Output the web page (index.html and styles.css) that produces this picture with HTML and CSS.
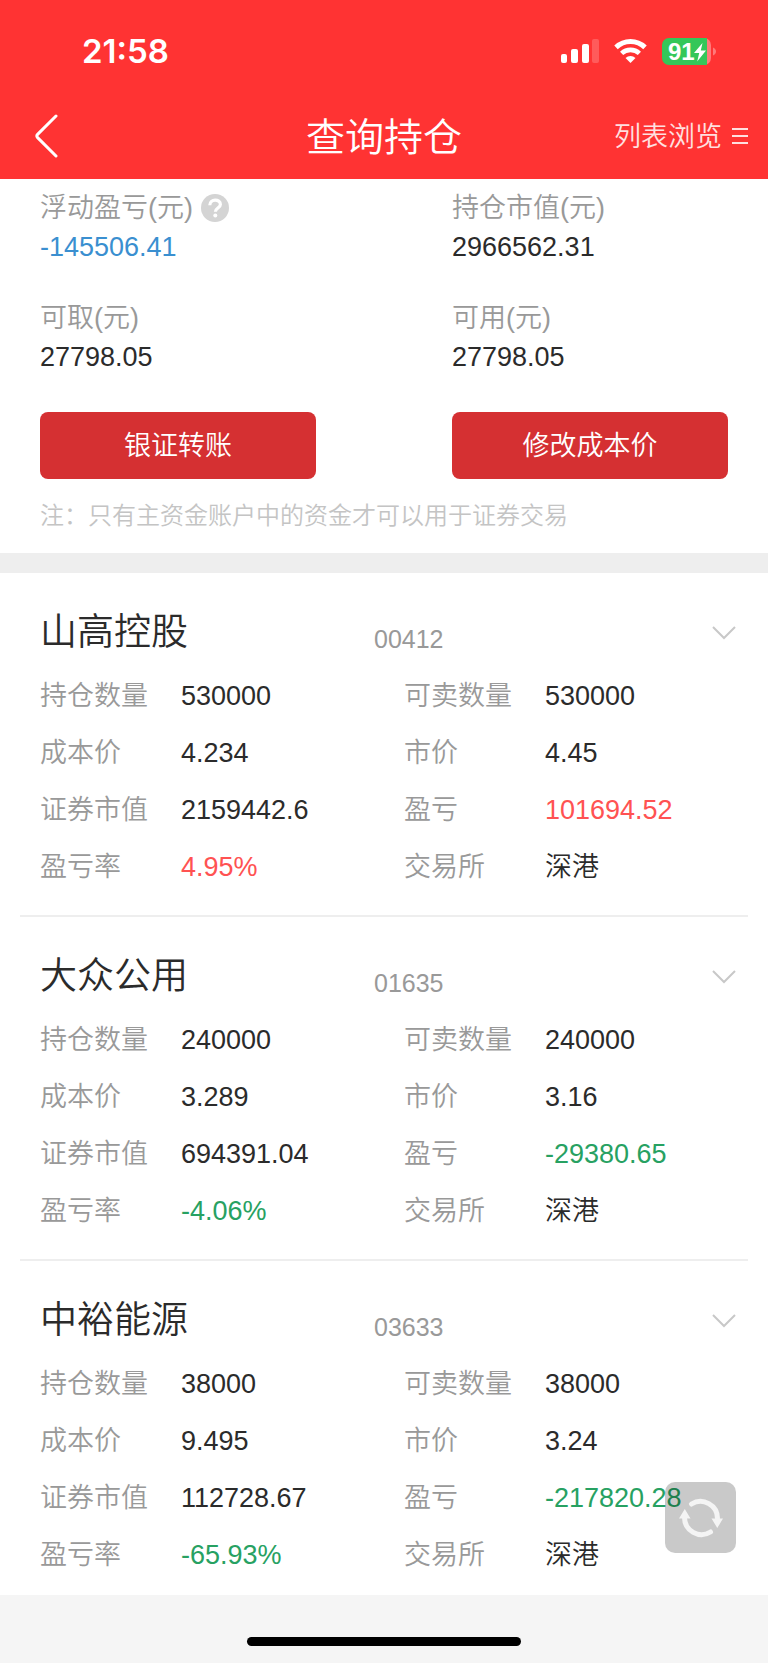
FILE: index.html
```html
<!DOCTYPE html>
<html lang="zh-CN">
<head>
  <meta charset="UTF-8">
  <meta name="viewport" content="width=device-width, initial-scale=1.0">
  <title>查询持仓</title>
  <link rel="stylesheet" href="styles.css">
</head>
<body>
  <header class="header">
    <div class="status-bar">
      <span class="time">21:58</span>
      <div class="status-icons">
        <svg class="signal" width="39" height="24" viewBox="0 0 39 24" fill="#fff">
          <rect x="1" y="15" width="6" height="9" rx="2"/>
          <rect x="11" y="10" width="7" height="14" rx="2"/>
          <rect x="22" y="5" width="7" height="19" rx="2"/>
          <rect x="32" y="0" width="7" height="24" rx="2" opacity=".2"/>
        </svg>
        <svg class="wifi" width="33" height="24" viewBox="0 0 33 24">
          <path d="M2 8.4a21 21 0 0 1 29 0" fill="none" stroke="#fff" stroke-width="5"/>
          <path d="M7.6 14.4a13 13 0 0 1 17.8 0" fill="none" stroke="#fff" stroke-width="4.6"/>
          <path d="M16.5 24l-5-5.1a7.3 7.3 0 0 1 10 0z" fill="#fff"/>
        </svg>
        <svg class="battery" width="54" height="27" viewBox="0 0 54 27">
          <path d="M7 0h35a7 7 0 0 1 7 7v13a7 7 0 0 1-7 7H7z" fill="#ff7a7a"/>
          <path d="M7 0h38v27H7a7 7 0 0 1-7-7V7a7 7 0 0 1 7-7z" fill="#34c759"/>
          <path d="M51 9.500c4 1.500 4 6.500 0 8z" fill="#ff7a7a"/>
          <text class="battery-text" x="6" y="22">91</text>
          <path d="M40.500 5L32 15h5.200l-2 8.500L44 12.500h-5.200z" fill="#fff"/>
        </svg>
      </div>
    </div>
    <nav class="nav">
      <button class="back" type="button" aria-label="返回">
        <svg width="24" height="44" viewBox="0 0 24 44" fill="none" stroke="#fff" stroke-width="3" stroke-linecap="round" stroke-linejoin="round">
          <path d="M21 2L2.600 20.400q-1.500 1.600 0 3.200L21 42"/>
        </svg>
      </button>
      <h1 class="title">查询持仓</h1>
      <button class="view-mode" type="button">
        <span>列表浏览</span>
        <svg width="16" height="18" viewBox="0 0 16 18" fill="none" stroke="#ffe0e0" stroke-width="2">
          <path d="M0 2h16M0 9h16M0 16h16"/>
        </svg>
      </button>
    </nav>
  </header>

  <main>
    <!-- Account summary -->
    <section class="summary">
      <dl class="funds">
        <div>
          <dt>浮动盈亏(元)
            <svg class="help" width="28" height="28" viewBox="0 0 28 28">
              <circle cx="14" cy="14" r="14" fill="#d4d4d4"/>
              <path d="M8.800 11.300c0-7 10.600-6.600 10.600-.9 0 3.600-5 3.700-5 7.300" fill="none" stroke="#fff" stroke-width="3.200"/>
              <circle cx="14.300" cy="21.500" r="2" fill="#fff"/>
            </svg>
          </dt>
          <dd class="blue">-145506.41</dd>
        </div>
        <div>
          <dt>持仓市值(元)</dt>
          <dd>2966562.31</dd>
        </div>
        <div>
          <dt>可取(元)</dt>
          <dd>27798.05</dd>
        </div>
        <div>
          <dt>可用(元)</dt>
          <dd>27798.05</dd>
        </div>
      </dl>
      <div class="actions">
        <button class="btn" type="button">银证转账</button>
        <button class="btn" type="button">修改成本价</button>
      </div>
      <p class="note">注：只有主资金账户中的资金才可以用于证券交易</p>
    </section>

    <!-- Holdings -->
    <section class="holdings">
      <article class="stock">
        <div class="stock-head">
          <h2>山高控股</h2>
          <span class="code">00412</span>
          <button class="expand" type="button" aria-label="展开">
            <svg width="24" height="14" viewBox="0 0 24 14" fill="none" stroke="#c8c8c8" stroke-width="2"><path d="M1 1l11 11L23 1"/></svg>
          </button>
        </div>
        <dl class="details">
          <div><dt>持仓数量</dt><dd>530000</dd></div>
          <div><dt>可卖数量</dt><dd>530000</dd></div>
          <div><dt>成本价</dt><dd>4.234</dd></div>
          <div><dt>市价</dt><dd>4.45</dd></div>
          <div><dt>证券市值</dt><dd>2159442.6</dd></div>
          <div><dt>盈亏</dt><dd class="up">101694.52</dd></div>
          <div><dt>盈亏率</dt><dd class="up">4.95%</dd></div>
          <div><dt>交易所</dt><dd>深港</dd></div>
        </dl>
      </article>

      <article class="stock">
        <div class="stock-head">
          <h2>大众公用</h2>
          <span class="code">01635</span>
          <button class="expand" type="button" aria-label="展开">
            <svg width="24" height="14" viewBox="0 0 24 14" fill="none" stroke="#c8c8c8" stroke-width="2"><path d="M1 1l11 11L23 1"/></svg>
          </button>
        </div>
        <dl class="details">
          <div><dt>持仓数量</dt><dd>240000</dd></div>
          <div><dt>可卖数量</dt><dd>240000</dd></div>
          <div><dt>成本价</dt><dd>3.289</dd></div>
          <div><dt>市价</dt><dd>3.16</dd></div>
          <div><dt>证券市值</dt><dd>694391.04</dd></div>
          <div><dt>盈亏</dt><dd class="down">-29380.65</dd></div>
          <div><dt>盈亏率</dt><dd class="down">-4.06%</dd></div>
          <div><dt>交易所</dt><dd>深港</dd></div>
        </dl>
      </article>

      <article class="stock">
        <div class="stock-head">
          <h2>中裕能源</h2>
          <span class="code">03633</span>
          <button class="expand" type="button" aria-label="展开">
            <svg width="24" height="14" viewBox="0 0 24 14" fill="none" stroke="#c8c8c8" stroke-width="2"><path d="M1 1l11 11L23 1"/></svg>
          </button>
        </div>
        <dl class="details">
          <div><dt>持仓数量</dt><dd>38000</dd></div>
          <div><dt>可卖数量</dt><dd>38000</dd></div>
          <div><dt>成本价</dt><dd>9.495</dd></div>
          <div><dt>市价</dt><dd>3.24</dd></div>
          <div><dt>证券市值</dt><dd>112728.67</dd></div>
          <div><dt>盈亏</dt><dd class="down">-217820.28</dd></div>
          <div><dt>盈亏率</dt><dd class="down">-65.93%</dd></div>
          <div><dt>交易所</dt><dd>深港</dd></div>
        </dl>
      </article>
    </section>
  </main>

  <footer class="home-bar"><span class="home-indicator"></span></footer>

  <button class="refresh" type="button" aria-label="刷新">
    <svg width="44" height="40" viewBox="0 0 44 40" fill="none" stroke="#f4f4f4" stroke-width="5" stroke-linecap="round">
      <path d="M12.500 6A17 17 0 0 1 38.500 20.500"/>
      <path d="M31.500 34A17 17 0 0 1 5.500 19.500"/>
      <path d="M32.500 20.500h11.500l-5.700 9.500zM0 20.500h11.500l-5.700-9.500z" fill="#f4f4f4" stroke="none"/>
    </svg>
  </button>
</body>
</html>
```

FILE: styles.css
```css
* { box-sizing: border-box; }
body { margin: 0; background: #f5f5f5; color: #2b2b2b; font-family: "Liberation Sans", "Noto Sans CJK SC", sans-serif; font-size: 27px; font-weight: 350; }
h1, h2, p, dl, dd { margin: 0; font-weight: inherit; }
button { border: 0; padding: 0; background: none; color: inherit; font: inherit; cursor: pointer; }
svg { display: block; flex-shrink: 0; }

/* Header */
.header { background: #ff3333; color: #fff; }
.status-bar { display: flex; justify-content: space-between; align-items: center; height: 93px; padding: 9px 52px 0 82px; }
.time { font: 600 33px Inter, sans-serif; }
.status-icons { display: flex; align-items: center; gap: 15px; }
.battery-text { font: 700 24px "Liberation Sans", sans-serif; fill: #fff; }
.nav { display: grid; grid-template-columns: 1fr auto 1fr; align-items: center; height: 86px; padding: 0 20px; }
.back { justify-self: start; padding-left: 15px; }
.title { padding-bottom: 4px; font-size: 39px; }
.view-mode { display: flex; align-items: center; justify-self: end; gap: 10px; color: #ffe0e0; }
.view-mode span { padding-bottom: 4px; }

/* Account summary */
.summary { padding: 9px 40px 19px; background: #fff; border-bottom: 20px solid #eee; }
.funds { display: grid; grid-template-columns: 1fr 1fr; gap: 31px 136px; line-height: 40px; }
.funds dt { display: flex; align-items: center; gap: 8px; height: 39px; white-space: nowrap; }
dt { color: #999; }
.blue { color: #3a8fd0; }
.actions { display: grid; grid-template-columns: 1fr 1fr; gap: 136px; margin: 35px 0 19px; }
.btn { height: 67px; padding-bottom: 4px; border-radius: 8px; background: #d53032; color: #fff; }
.note { color: #c4c4c4; font-size: 24px; line-height: 36px; }
.up { color: #ff5252; }
.down { color: #27a162; }

/* Holdings */
.holdings { padding: 0 20px; background: #fff; }
.stock { padding: 32px 0 19px 20px; border-bottom: 2px solid #eee; }
.stock:last-child { padding-bottom: 11px; border-bottom: 0; }
.stock-head { display: grid; grid-template-columns: 334px 1fr auto; align-items: center; height: 55px; margin-bottom: 8px; padding-right: 12px; }
.stock-head h2 { font-size: 37px; line-height: 55px; }
.code { padding-top: 14px; color: #999; font-size: 25px; }
.details { display: grid; grid-template-columns: 1fr 1fr; margin-right: -20px; line-height: 57px; }
.details div { display: grid; grid-template-columns: 141px 1fr; height: 57px; }

/* Bottom area */
.home-bar { display: flex; justify-content: center; align-items: flex-end; height: 68px; padding-bottom: 17px; }
.home-indicator { width: 274px; height: 9px; border-radius: 5px; background: #000; }
.refresh { position: fixed; right: 32px; bottom: 110px; display: flex; justify-content: center; align-items: center; width: 71px; height: 71px; border-radius: 10px; background: rgba(0, 0, 0, .21); }
```
